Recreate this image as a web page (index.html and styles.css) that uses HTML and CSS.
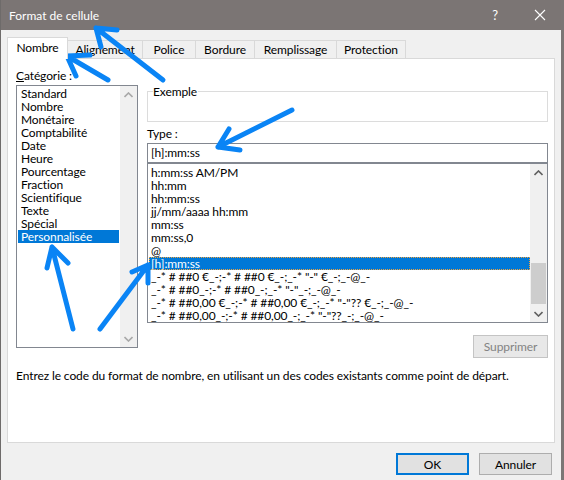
FILE: index.html
```html
<!DOCTYPE html>
<html lang="fr">
<head>
<meta charset="utf-8">
<title>Format de cellule</title>
<link rel="stylesheet" href="styles.css">
</head>
<body>
<div class="window">
  <div class="titlebar">
    <span class="title">Format de cellule</span>
    <span class="help">?</span>
    <span class="close"><svg width="12" height="12" viewBox="0 0 12 12"><path d="M1 1L11 11M11 1L1 11" stroke="#fff" stroke-width="1.1" fill="none"/></svg></span>
  </div>
  <div class="body">
    <div class="tabs">
      <div class="tab active t1">Nombre</div>
      <div class="tab t2">Alignement</div>
      <div class="tab t3">Police</div>
      <div class="tab t4">Bordure</div>
      <div class="tab t5">Remplissage</div>
      <div class="tab t6">Protection</div>
    </div>
    <div class="panel">
      <div class="cols">
        <div class="leftcol">
          <div class="label"><u>C</u>atégorie :</div>
          <div class="listbox catlist">
            <div class="items">
              <div class="item">Standard</div>
              <div class="item">Nombre</div>
              <div class="item">Monétaire</div>
              <div class="item">Comptabilité</div>
              <div class="item">Date</div>
              <div class="item">Heure</div>
              <div class="item">Pourcentage</div>
              <div class="item">Fraction</div>
              <div class="item">Scientifique</div>
              <div class="item">Texte</div>
              <div class="item">Spécial</div>
              <div class="item sel">Personnalisée</div>
            </div>
            <div class="sb disabled">
              <div class="sbbtn"><svg width="9" height="6" viewBox="0 0 9 6"><path d="M0.5 5L4.5 1L8.5 5" stroke="currentColor" stroke-width="1.6" fill="none"/></svg></div>
              <div class="track"></div>
              <div class="sbbtn"><svg width="9" height="6" viewBox="0 0 9 6"><path d="M0.5 1L4.5 5L8.5 1" stroke="currentColor" stroke-width="1.6" fill="none"/></svg></div>
            </div>
          </div>
        </div>
        <div class="rightcol">
          <fieldset class="group">
            <legend>Exemple</legend>
          </fieldset>
          <div class="label typelabel">Type :</div>
          <div class="input">[h]:mm:ss</div>
          <div class="listbox typelist">
            <div class="items">
              <div class="item">h:mm:ss AM/PM</div>
              <div class="item">hh:mm</div>
              <div class="item">hh:mm:ss</div>
              <div class="item">jj/mm/aaaa hh:mm</div>
              <div class="item">mm:ss</div>
              <div class="item">mm:ss,0</div>
              <div class="item">@</div>
              <div class="item sel focus">[h]:mm:ss</div>
              <div class="item">_-* # ##0 €_-;-* # ##0 €_-;_-* "-" €_-;_-@_-</div>
              <div class="item">_-* # ##0_-;-* # ##0_-;_-* "-"_-;_-@_-</div>
              <div class="item">_-* # ##0,00 €_-;-* # ##0,00 €_-;_-* "-"?? €_-;_-@_-</div>
              <div class="item">_-* # ##0,00_-;-* # ##0,00_-;_-* "-"??_-;_-@_-</div>
            </div>
            <div class="sb">
              <div class="sbbtn"><svg width="9" height="6" viewBox="0 0 9 6"><path d="M0.5 5L4.5 1L8.5 5" stroke="currentColor" stroke-width="1.6" fill="none"/></svg></div>
              <div class="track"><div class="thumb"></div></div>
              <div class="sbbtn"><svg width="9" height="6" viewBox="0 0 9 6"><path d="M0.5 1L4.5 5L8.5 1" stroke="currentColor" stroke-width="1.6" fill="none"/></svg></div>
            </div>
          </div>
          <div class="btnrow">
            <div class="btn disabledbtn">Supprimer</div>
          </div>
        </div>
      </div>
      <div class="desc">Entrez le code du format de nombre, en utilisant un des codes existants comme point de départ.</div>
    </div>
    <div class="footer">
      <div class="btn default">OK</div>
      <div class="btn">Annuler</div>
    </div>
  </div>
  <svg class="arrows" width="564" height="480" viewBox="0 0 564 480">
    <g stroke="#0a84f5" stroke-width="5" stroke-linecap="round" stroke-linejoin="round" fill="none">
      <path d="M163 80L96 28M96 28L117 30M96 28L101 47"/>
      <path d="M108 80L67 56M67 56L90 55M67 56L76 76"/>
      <path d="M292 110L218 147M218 147L229 129M218 147L240 150"/>
      <path d="M73 329L52 247M52 247L47 268M52 247L68 263"/>
      <path d="M100 329L148 265M148 265L132 272M148 265L148 283"/>
    </g>
  </svg>
</div>
</body>
</html>
```

FILE: styles.css
```css
* { box-sizing: border-box; }
html, body {
  margin: 0;
  padding: 0;
  width: 564px;
  height: 480px;
  overflow: hidden;
  background: #f0f0f0;
  font-family: Lato, "Noto Sans", "Liberation Sans", sans-serif;
  font-size: 12px;
  letter-spacing: -0.1px;
  color: #000;
}
.window {
  position: relative;
  width: 564px;
  height: 480px;
  border-left: 1px solid #6e6b6a;
  border-right: 3px solid #7b7675;
  background: #f0f0f0;
}
.titlebar {
  height: 30px;
  background: #7b7574;
  display: flex;
  align-items: center;
  color: #fff;
  padding-left: 8px;
}
.title { flex: 1; font-size: 12px; letter-spacing: 0; }
.help { width: 12px; margin-right: 33px; text-align: center; font-size: 13px; }
.close { width: 12px; height: 12px; margin-right: 15px; display: flex; }
.body { padding: 7px 6px 0 6px; }
.tabs { display: flex; align-items: flex-end; height: 21px; }
.tab {
  height: 18px;
  border: 1px solid #d9d9d9;
  border-bottom: none;
  background: #f0f0f0;
  margin-left: -1px;
  display: flex;
  align-items: center;
  justify-content: center;
  line-height: 14px;
}
.tab.active {
  height: 22px;
  background: #fff;
  margin-left: 0;
  margin-bottom: -1px;
  position: relative;
  z-index: 1;
  padding-bottom: 2px;
}
.t1 { width: 61px; }
.t2 { width: 76px; }
.t3 { width: 54px; }
.t4 { width: 60px; }
.t5 { width: 83px; }
.t6 { width: 70px; }
.panel {
  width: 548px;
  height: 385px;
  background: #fff;
  border: 1px solid #d9d9d9;
  padding: 10px 8px 0 8px;
}
.cols {
  display: grid;
  grid-template-columns: 122px 401px;
  column-gap: 9px;
}
.label { line-height: 14px; height: 14px; }
.listbox {
  border: 1px solid #828790;
  display: flex;
  background: #fff;
}
.catlist { height: 263px; margin-top: 2px; }
.items { flex: 1; padding: 1px; overflow: hidden; }
.item {
  height: 13px;
  line-height: 13px;
  padding-left: 3px;
  white-space: nowrap;
}
.item.sel { background: #0078d7; color: #fff; }
.typelist .items { padding: 2px 0 0 1px; }
.typelist .item { padding-left: 2px; }
.item.focus { outline: 1px dotted #f0a23c; outline-offset: -1px; }
.sb {
  width: 17px;
  background: #f0f0f0;
  display: flex;
  flex-direction: column;
  color: #606060;
}
.sb.disabled { color: #a8a8a8; }
.sbbtn {
  height: 17px;
  display: flex;
  align-items: center;
  justify-content: center;
}
.track { flex: 1; }
.thumb {
  margin: 82px 1px 0 1px;
  height: 41px;
  background: #cdcdcd;
}
.group {
  margin: 15px 0 0 0;
  padding: 0;
  height: 38px;
  border: 1px solid #dcdcdc;
}
.group legend {
  margin-left: 5px;
  padding: 0 1px 0 0;
  line-height: 15px;
  font-size: 12px;
}
.typelabel { margin-top: 5px; }
.input {
  margin-top: 2px;
  height: 20px;
  border: 1px solid #828790;
  padding-left: 3px;
  line-height: 18px;
  background: #fff;
}
.typelist { height: 160px; }
.btnrow { display: flex; justify-content: flex-end; margin-top: 12px; }
.btn {
  width: 73px;
  height: 23px;
  border: 1px solid #adadad;
  background: #e1e1e1;
  display: flex;
  align-items: center;
  justify-content: center;
}
.btn.disabledbtn {
  width: 75px;
  color: #838383;
  background: #e8e8e8;
  border-color: #c4c4c4;
}
.desc { margin-top: 11px; line-height: 14px; }
.footer {
  display: flex;
  justify-content: flex-end;
  gap: 10px;
  margin-top: 10px;
  padding-right: 3px;
}
.footer .btn { height: 22px; }
.btn.default { border: 2px solid #0078d7; }
.arrows {
  position: absolute;
  left: -1px;
  top: 0;
  pointer-events: none;
}
```
